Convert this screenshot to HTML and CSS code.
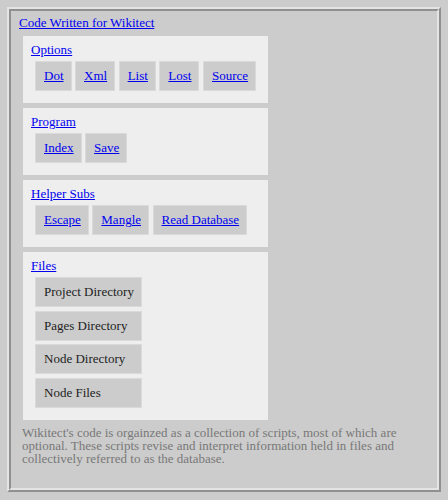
FILE: index.html
```html
<!DOCTYPE html>
<html>
<head>
<meta charset="utf-8">
<link rel="stylesheet" href="styles.css">
</head>
<body>
<div class="frame">
  <div class="title"><a href="#">Code Written for Wikitect</a></div>
  <div class="panel">
    <div class="heading"><a href="#">Options</a></div>
    <div class="row">
      <span class="btn"><a href="#">Dot</a></span>
      <span class="btn"><a href="#">Xml</a></span>
      <span class="btn"><a href="#">List</a></span>
      <span class="btn"><a href="#">Lost</a></span>
      <span class="btn"><a href="#">Source</a></span>
    </div>
  </div>
  <div class="panel">
    <div class="heading"><a href="#">Program</a></div>
    <div class="row">
      <span class="btn"><a href="#">Index</a></span>
      <span class="btn"><a href="#">Save</a></span>
    </div>
  </div>
  <div class="panel">
    <div class="heading"><a href="#">Helper Subs</a></div>
    <div class="row">
      <span class="btn"><a href="#">Escape</a></span>
      <span class="btn"><a href="#">Mangle</a></span>
      <span class="btn"><a href="#">Read Database</a></span>
    </div>
  </div>
  <div class="panel">
    <div class="heading"><a href="#">Files</a></div>
    <div class="column">
      <span class="btn plain">Project Directory</span>
      <span class="btn plain">Pages Directory</span>
      <span class="btn plain">Node Directory</span>
      <span class="btn plain">Node Files</span>
    </div>
  </div>
  <p class="desc">Wikitect's code is orgainzed as a collection of scripts, most of which are optional. These scripts revise and interpret information held in files and collectively referred to as the database.</p>
</div>
</body>
</html>
```
FILE: styles.css
```css
html, body {
  background: #cccccc;
}
body {
  margin: 7px;
  font-family: "Liberation Serif", "Times New Roman", serif;
  font-size: 13px;
  line-height: 15px;
  color: #222;
}
a {
  color: #0000ee;
  text-decoration: underline;
}
.frame {
  border: 4px ridge #e4e4e4;
  padding: 4px 8px 23px 8px;
}
.title {
  height: 15px;
}
.panel {
  margin: 6px 0 0 4px;
  width: 229px;
  background: #eeeeee;
  padding: 6px 8px 12px 8px;
}
.panel + .panel {
  margin-top: 5px;
}
.heading {
  height: 15px;
}
.row {
  display: flex;
  gap: 3.5px;
  margin: 4px 0 0 4px;
}
.column {
  display: inline-flex;
  flex-direction: column;
  gap: 3.5px;
  margin: 4px 0 0 4px;
}
.btn {
  display: block;
  background: #cccccc;
  border: 1px solid #dadada;
  padding: 0 7px 0 8px;
  line-height: 28px;
  height: 28px;
  white-space: nowrap;
}
.plain {
  color: #222;
}
.desc {
  margin: 6px 0 0 3px;
  width: 395px;
  font-size: 13px;
  line-height: 13.3px;
  color: #787878;
}
```
